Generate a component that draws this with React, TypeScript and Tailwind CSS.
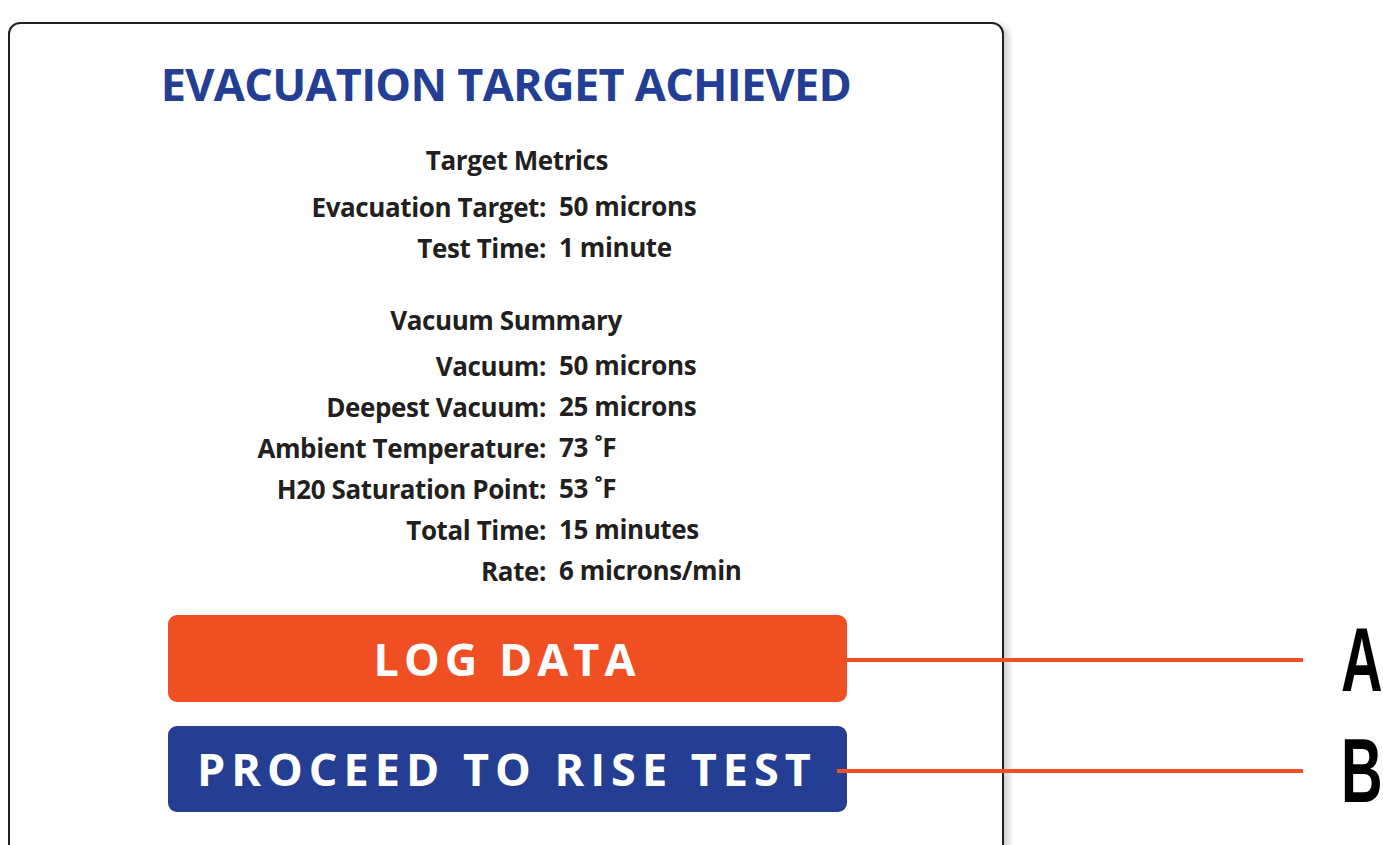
import React from 'react';

const targetRows = [
  { label: 'Evacuation Target:', value: '50 microns' },
  { label: 'Test Time:', value: '1 minute' },
];

const summaryRows = [
  { label: 'Vacuum:', value: '50 microns' },
  { label: 'Deepest Vacuum:', value: '25 microns' },
  { label: 'Ambient Temperature:', value: '73 ˚F' },
  { label: 'H20 Saturation Point:', value: '53 ˚F' },
  { label: 'Total Time:', value: '15 minutes' },
  { label: 'Rate:', value: '6 microns/min' },
];

const MetricRows: React.FC<{ rows: { label: string; value: string }[] }> = ({ rows }) => (
  <div className="grid grid-cols-[536px_1fr] gap-x-[13px] auto-rows-[41px] items-center">
    {rows.map((r) => (
      <React.Fragment key={r.label}>
        <div className="text-right">{r.label}</div>
        <div className="-translate-y-[1px]">{r.value}</div>
      </React.Fragment>
    ))}
  </div>
);

const Callout: React.FC<{ letter: string; className: string }> = ({ letter, className }) => (
  <div className={`absolute flex items-center h-[80px] ${className}`}>
    <div className="flex-1 h-[4px] bg-[#f04e23]" />
    <div
      className="w-[42px] ml-[38px] text-[90px] leading-[80px] font-bold text-black"
      style={{ fontFamily: '"Liberation Sans", sans-serif' }}
    >
      <span className="inline-block origin-left scale-x-[0.64]">{letter}</span>
    </div>
  </div>
);

export default function App() {
  return (
    <div
      className="relative w-[1383px] h-[845px] overflow-hidden bg-white pl-[8px] pt-[22px]"
      style={{ fontFamily: '"Open Sans", "Liberation Sans", sans-serif' }}
    >
      <div className="w-[996px] h-[900px] border-2 border-[#231f20] rounded-[12px] bg-white shadow-[5px_3px_6px_rgba(0,0,0,0.18)]">
        <h1 className="pt-[34px] text-center text-[45px] leading-[52px] font-bold tracking-[-0.7px] text-[#233e94]">
          EVACUATION TARGET ACHIEVED
        </h1>

        <div className="mt-[31px] text-[#231f20] text-[26px] font-bold tracking-[-0.4px]">
          <div className="text-center pl-[22px] leading-[38px] mb-[8px]">Target Metrics</div>
          <MetricRows rows={targetRows} />

          <div className="mt-[32px] mb-[7px] text-center leading-[38px]">Vacuum Summary</div>
          <MetricRows rows={summaryRows} />
        </div>

        <div className="mt-[23px] flex flex-col items-center gap-[24px] pl-[2px]">
          <button className="w-[679px] h-[87px] rounded-[9px] bg-[#f04e23] text-white text-[45px] font-bold tracking-[5px]">
            LOG DATA
          </button>
          <button className="w-[679px] h-[86px] rounded-[9px] bg-[#243e93] text-white text-[45px] font-bold tracking-[6px]">
            PROCEED TO RISE TEST
          </button>
        </div>
      </div>

      {/* callouts A / B */}
      <Callout letter="A" className="left-[845px] top-[620px] w-[538px]" />
      <Callout letter="B" className="left-[837px] top-[731px] w-[546px]" />
    </div>
  );
}
